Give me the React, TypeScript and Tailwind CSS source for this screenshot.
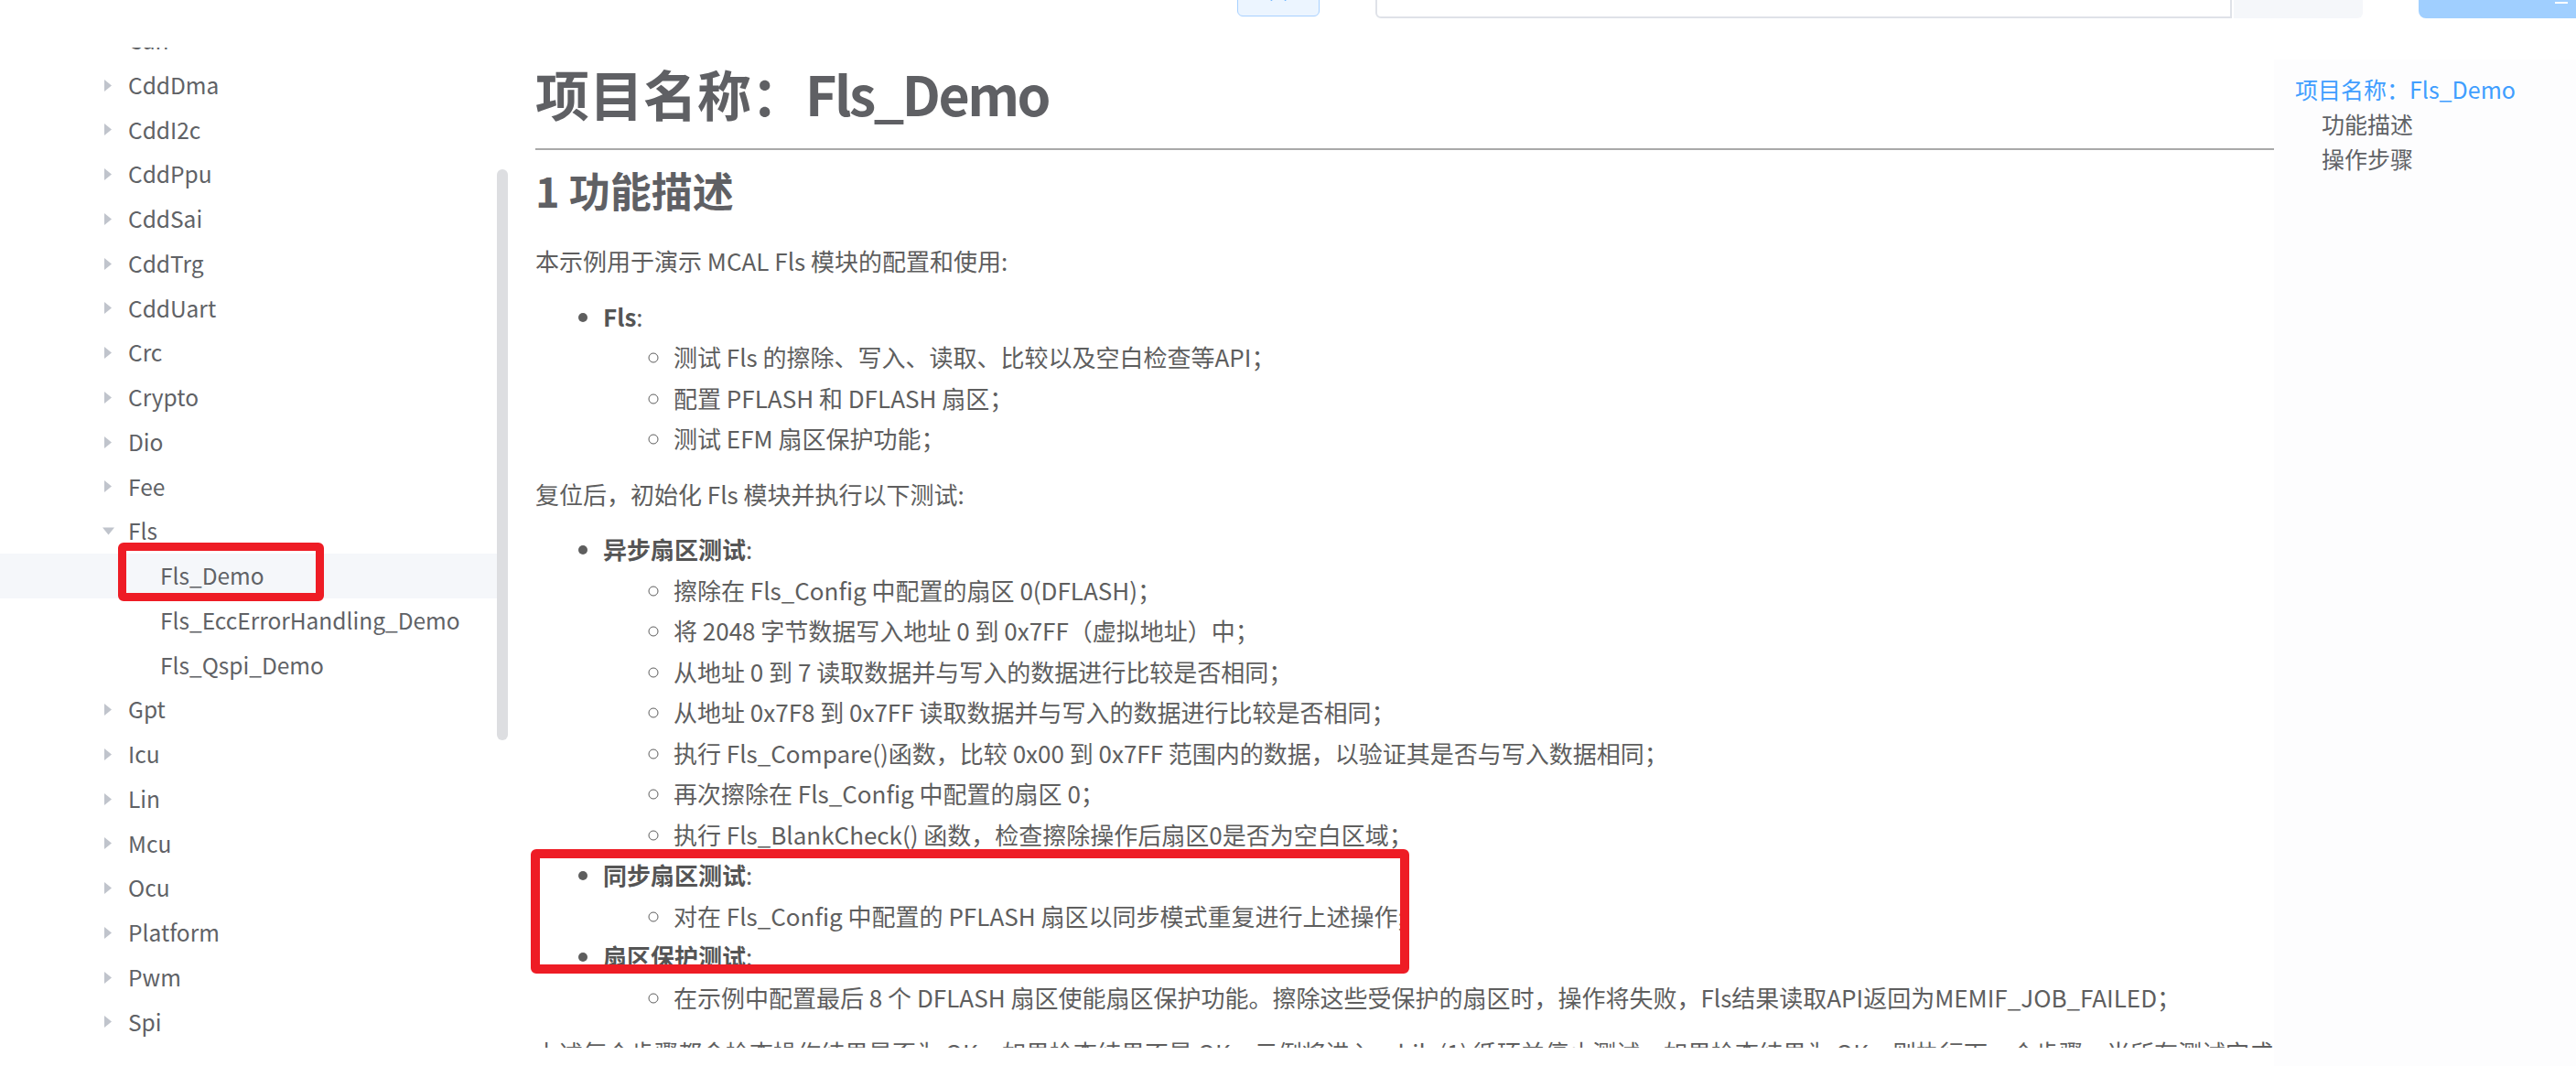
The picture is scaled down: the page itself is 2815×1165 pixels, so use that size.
import { User } from "lucide-react";

const modules = [
  "Can",
  "CddDma",
  "CddI2c",
  "CddPpu",
  "CddSai",
  "CddTrg",
  "CddUart",
  "Crc",
  "Crypto",
  "Dio",
  "Fee",
];
const afterFls = ["Gpt", "Icu", "Lin", "Mcu", "Ocu", "Platform", "Pwm", "Spi"];
const flsChildren = ["Fls_Demo", "Fls_EccErrorHandling_Demo", "Fls_Qspi_Demo"];

function Caret({ open = false }: { open?: boolean }) {
  if (open) {
    return (
      <svg width="13" height="13" viewBox="0 0 13 13" className="shrink-0 -ml-[2px]">
        <polygon points="0,2.5 13,2.5 6.5,10.5" fill="#c0c4cc" />
      </svg>
    );
  }
  return (
    <svg width="8" height="13" viewBox="0 0 8 13" className="shrink-0">
      <polygon points="0,0 8,6.5 0,13" fill="#c0c4cc" />
    </svg>
  );
}

function TreeRow({ label, open }: { label: string; open?: boolean }) {
  return (
    <div className="h-[48.75px] flex items-center pl-[114px] gap-[18px]">
      <Caret open={open} />
      <span className={open ? "-ml-[3px]" : ""}>{label}</span>
    </div>
  );
}

function Bold({ children }: { children: string }) {
  return <strong className="font-bold text-[#555555]">{children}</strong>;
}

export default function App() {
  return (
    <div className="w-[2815px] h-[1165px] bg-white overflow-hidden relative font-['Noto_Sans_CJK_SC','Noto_Sans',sans-serif]">
      {/* top bar, only its lower edge is on screen */}
      <header className="h-[52px] bg-white relative z-10">
        <div className="h-[20px] flex items-end overflow-hidden">
          <div className="ml-[1352px] w-[90px] h-[60px] mb-[2px] shrink-0 rounded-[6px] bg-[#ecf5ff] border border-[#a8d1ff] flex items-start justify-center pt-[18px] text-[#409eff]">
            <User size={26} strokeWidth={2} />
          </div>
          <div className="ml-[61px] w-[936px] h-[60px] shrink-0 rounded-l-[6px] border-2 border-[#dfe2e8] bg-white" />
          <div className="ml-[2px] w-[141px] h-[60px] shrink-0 rounded-r-[6px] bg-[#f5f7fa]" />
          <div className="ml-[61px] w-[200px] h-[60px] shrink-0 rounded-[8px] bg-[#a0cfff] relative">
            <div className="absolute left-[149px] top-[42px] w-[14px] h-[2px] bg-white" />
          </div>
        </div>
      </header>

      <div className="flex h-[1113px]">
        {/* sidebar tree */}
        <aside className="w-[543px] shrink-0 h-full overflow-hidden text-[24.5px] text-[#606266]">
          <div className="-mt-[32px]">
            {modules.map((m) => (
              <TreeRow key={m} label={m} />
            ))}
            <TreeRow label="Fls" open />
            {flsChildren.map((c, i) => (
              <div
                key={c}
                className={`h-[48.75px] flex items-center pl-[175px] ${i === 0 ? "bg-[#f5f7fa]" : ""}`}
              >
                {c}
              </div>
            ))}
            {afterFls.map((m) => (
              <TreeRow key={m} label={m} />
            ))}
          </div>
        </aside>

        {/* scrollbar */}
        <div className="w-[12px] shrink-0 pt-[133px]">
          <div className="h-[624px] w-full rounded-full bg-[#dddee1]" />
        </div>

        {/* article */}
        <main className="ml-[30px] w-[1900px] h-[1093px] shrink-0 overflow-hidden text-[26px] leading-[44.5px] text-[#5e5e5e]">
          <h1 className="pt-[13px] pb-[23px] border-b-2 border-[#a9a9a9] text-[59px] leading-[74px] font-bold text-[#5f6064]">
            项目名称：<span className="tracking-[-2.5px]">Fls_Demo</span>
          </h1>
          <h2 className="mt-[16px] mb-[27px] text-[45px] leading-[56px] font-bold text-[#5f6064]">1 功能描述</h2>

          <p className="my-4">本示例用于演示 MCAL Fls 模块的配置和使用:</p>
          <ul className="my-4 pl-[74px] list-disc">
            <li>
              <Bold>Fls</Bold>:
              <ul className="pl-[77px] list-[circle]">
                <li>测试 Fls 的擦除、写入、读取、比较以及空白检查等API；</li>
                <li>配置 PFLASH 和 DFLASH 扇区；</li>
                <li>测试 EFM 扇区保护功能；</li>
              </ul>
            </li>
          </ul>

          <p className="my-4">复位后，初始化 Fls 模块并执行以下测试:</p>
          <ul className="my-4 pl-[74px] list-disc">
            <li>
              <Bold>异步扇区测试</Bold>:
              <ul className="pl-[77px] list-[circle]">
                <li>擦除在 Fls_Config 中配置的扇区 0(DFLASH)；</li>
                <li>将 2048 字节数据写入地址 0 到 0x7FF（虚拟地址）中；</li>
                <li>从地址 0 到 7 读取数据并与写入的数据进行比较是否相同；</li>
                <li>从地址 0x7F8 到 0x7FF 读取数据并与写入的数据进行比较是否相同；</li>
                <li>执行 Fls_Compare()函数，比较 0x00 到 0x7FF 范围内的数据，以验证其是否与写入数据相同；</li>
                <li>再次擦除在 Fls_Config 中配置的扇区 0；</li>
                <li>执行 Fls_BlankCheck() 函数，检查擦除操作后扇区0是否为空白区域；</li>
              </ul>
            </li>
            <li>
              <Bold>同步扇区测试</Bold>:
              <ul className="pl-[77px] list-[circle]">
                <li>对在 Fls_Config 中配置的 PFLASH 扇区以同步模式重复进行上述操作;</li>
              </ul>
            </li>
            <li>
              <Bold>扇区保护测试</Bold>:
              <ul className="pl-[77px] list-[circle]">
                <li>
                  在示例中配置最后 8 个 DFLASH 扇区使能扇区保护功能。擦除这些受保护的扇区时，操作将失败，Fls结果读取API返回为MEMIF_JOB_FAILED；
                </li>
              </ul>
            </li>
          </ul>
          <p className="my-4">
            上述每个步骤都会检查操作结果是否为 OK，如果检查结果不是 OK，示例将进入 while(1) 循环并停止测试，如果检查结果为 OK，则执行下一个步骤，当所有测试完成后结束。
          </p>
        </main>

        {/* table of contents */}
        <nav className="flex-1 mt-[13px] bg-[#fdfdfe] pl-[23px] pt-[13px] text-[25px] leading-[38px]">
          <div className="text-[#409eff] whitespace-nowrap">项目名称：Fls_Demo</div>
          <div className="pl-[29px] text-[#606266]">功能描述</div>
          <div className="pl-[29px] text-[#606266]">操作步骤</div>
        </nav>
      </div>

      {/* red annotation boxes */}
      <div className="absolute left-[129px] top-[593px] w-[225px] h-[64px] border-[9px] border-[#ee1c25] rounded-[6px]" />
      <div className="absolute left-[580px] top-[928px] w-[960px] h-[136px] border-[10px] border-[#ee1c25] rounded-[6px]" />
    </div>
  );
}
